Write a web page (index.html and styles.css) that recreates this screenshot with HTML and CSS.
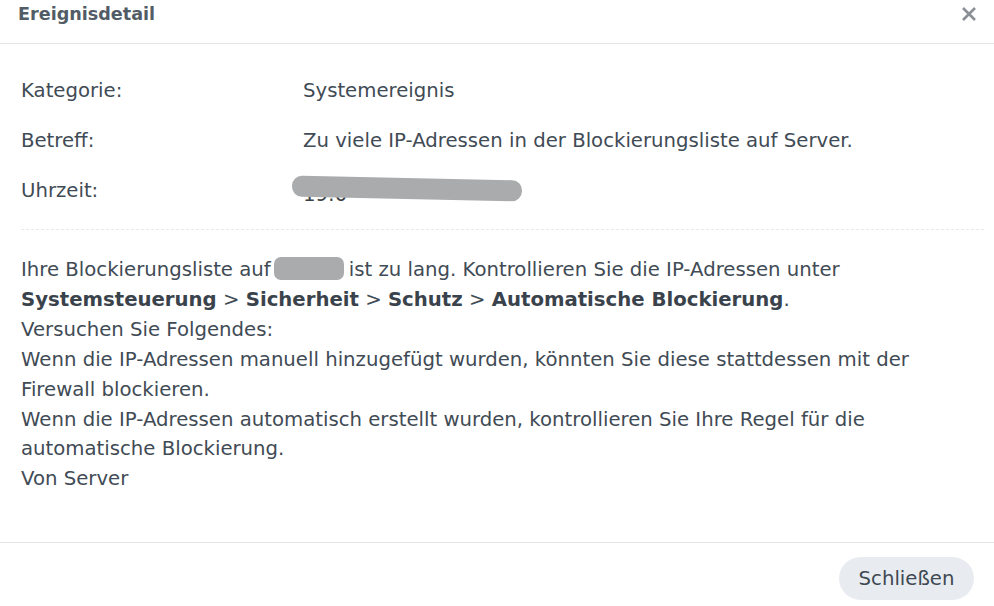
FILE: index.html
```html
<!DOCTYPE html>
<html lang="de">
<head>
<meta charset="utf-8">
<title>Ereignisdetail</title>
<link rel="stylesheet" href="styles.css">
</head>
<body>
<div class="dialog">
  <header class="dlg-header">
    <h1 class="dlg-title">Ereignisdetail</h1>
    <button class="dlg-close" aria-label="Schließen">
      <svg width="16" height="16" viewBox="0 0 16 16"><path d="M2 2 L14 14 M14 2 L2 14" stroke="#8a8f95" stroke-width="2.6" stroke-linecap="butt"/></svg>
    </button>
  </header>
  <main class="dlg-body">
    <div class="info">
      <div class="info-row"><span class="info-label">Kategorie:</span><span class="info-value">Systemereignis</span></div>
      <div class="info-row"><span class="info-label">Betreff:</span><span class="info-value">Zu viele IP-Adressen in der Blockierungsliste auf Server.</span></div>
      <div class="info-row"><span class="info-label">Uhrzeit:</span><span class="info-value time"><span class="time-text">19:0</span><span class="redact redact-time"></span></span></div>
    </div>
    <div class="message">
      Ihre Blockierungsliste auf<span class="redact redact-name"></span>ist zu lang. Kontrollieren Sie die IP-Adressen unter<br>
      <b>Systemsteuerung</b> &gt; <b>Sicherheit</b> &gt; <b>Schutz</b> &gt; <b>Automatische Blockierung</b>.<br>
      Versuchen Sie Folgendes:<br>
      Wenn die IP-Adressen manuell hinzugefügt wurden, könnten Sie diese stattdessen mit der<br>
      Firewall blockieren.<br>
      Wenn die IP-Adressen automatisch erstellt wurden, kontrollieren Sie Ihre Regel für die<br>
      automatische Blockierung.<br>
      Von Server
    </div>
  </main>
  <footer class="dlg-footer">
    <button class="btn">Schließen</button>
  </footer>
</div>
</body>
</html>
```
FILE: styles.css
```css
* { box-sizing: border-box; }
html, body { margin: 0; padding: 0; background: #fff; }
body {
  font-family: "DejaVu Sans", Verdana, sans-serif;
  color: #414b55;
  width: 994px;
  height: 606px;
  overflow: hidden;
}
.dialog {
  display: flex;
  flex-direction: column;
  height: 606px;
}
.dlg-header {
  height: 44px;
  border-bottom: 1px solid #e3e5e8;
  display: flex;
  align-items: flex-start;
  justify-content: space-between;
  padding: 2px 17px 0 18px;
}
.dlg-title {
  margin: 0;
  font-size: 17.6px;
  font-weight: bold;
  color: #525c66;
  line-height: 24px;
}
.dlg-close {
  border: 0;
  background: none;
  padding: 0;
  margin-top: 4px;
  width: 16px;
  height: 16px;
  cursor: pointer;
}
.dlg-body {
  flex: 1;
  padding: 0 10px 0 21px;
}
.info {
  padding-top: 33px;
  padding-bottom: 2px;
  border-bottom: 1px dashed #e6e8eb;
}
.info-row {
  display: grid;
  grid-template-columns: 282px 1fr;
  height: 50px;
  font-size: 19.7px;
  line-height: 27px;
}
.info-value.time { position: relative; }
.time-text {
  position: relative;
  top: 4px;
  color: #3a3f44;
}
.redact {
  display: inline-block;
  background: #a9abad;
  border-radius: 10px;
}
.redact-time {
  position: absolute;
  left: -11px;
  top: 1px;
  width: 230px;
  height: 21px;
  border-radius: 10px;
  transform: rotate(1.2deg);
}
.redact-name {
  width: 70px;
  height: 23px;
  vertical-align: -4px;
  margin: 0 5px 0 3px;
  border-radius: 7px;
}
.message {
  padding-top: 25px;
  font-size: 19.7px;
  line-height: 29.9px;
}
.message b { color: #3a434c; }
.dlg-footer {
  height: 64px;
  border-top: 1px solid #e3e5e8;
  display: flex;
  justify-content: flex-end;
  align-items: flex-start;
  padding: 14px 20px 0 0;
}
.btn {
  font-family: inherit;
  font-size: 19.7px;
  color: #3f4953;
  background: #e8ecf1;
  border: 0;
  border-radius: 22px;
  height: 43px;
  width: 135px;
  padding: 0;
  cursor: pointer;
}
```
